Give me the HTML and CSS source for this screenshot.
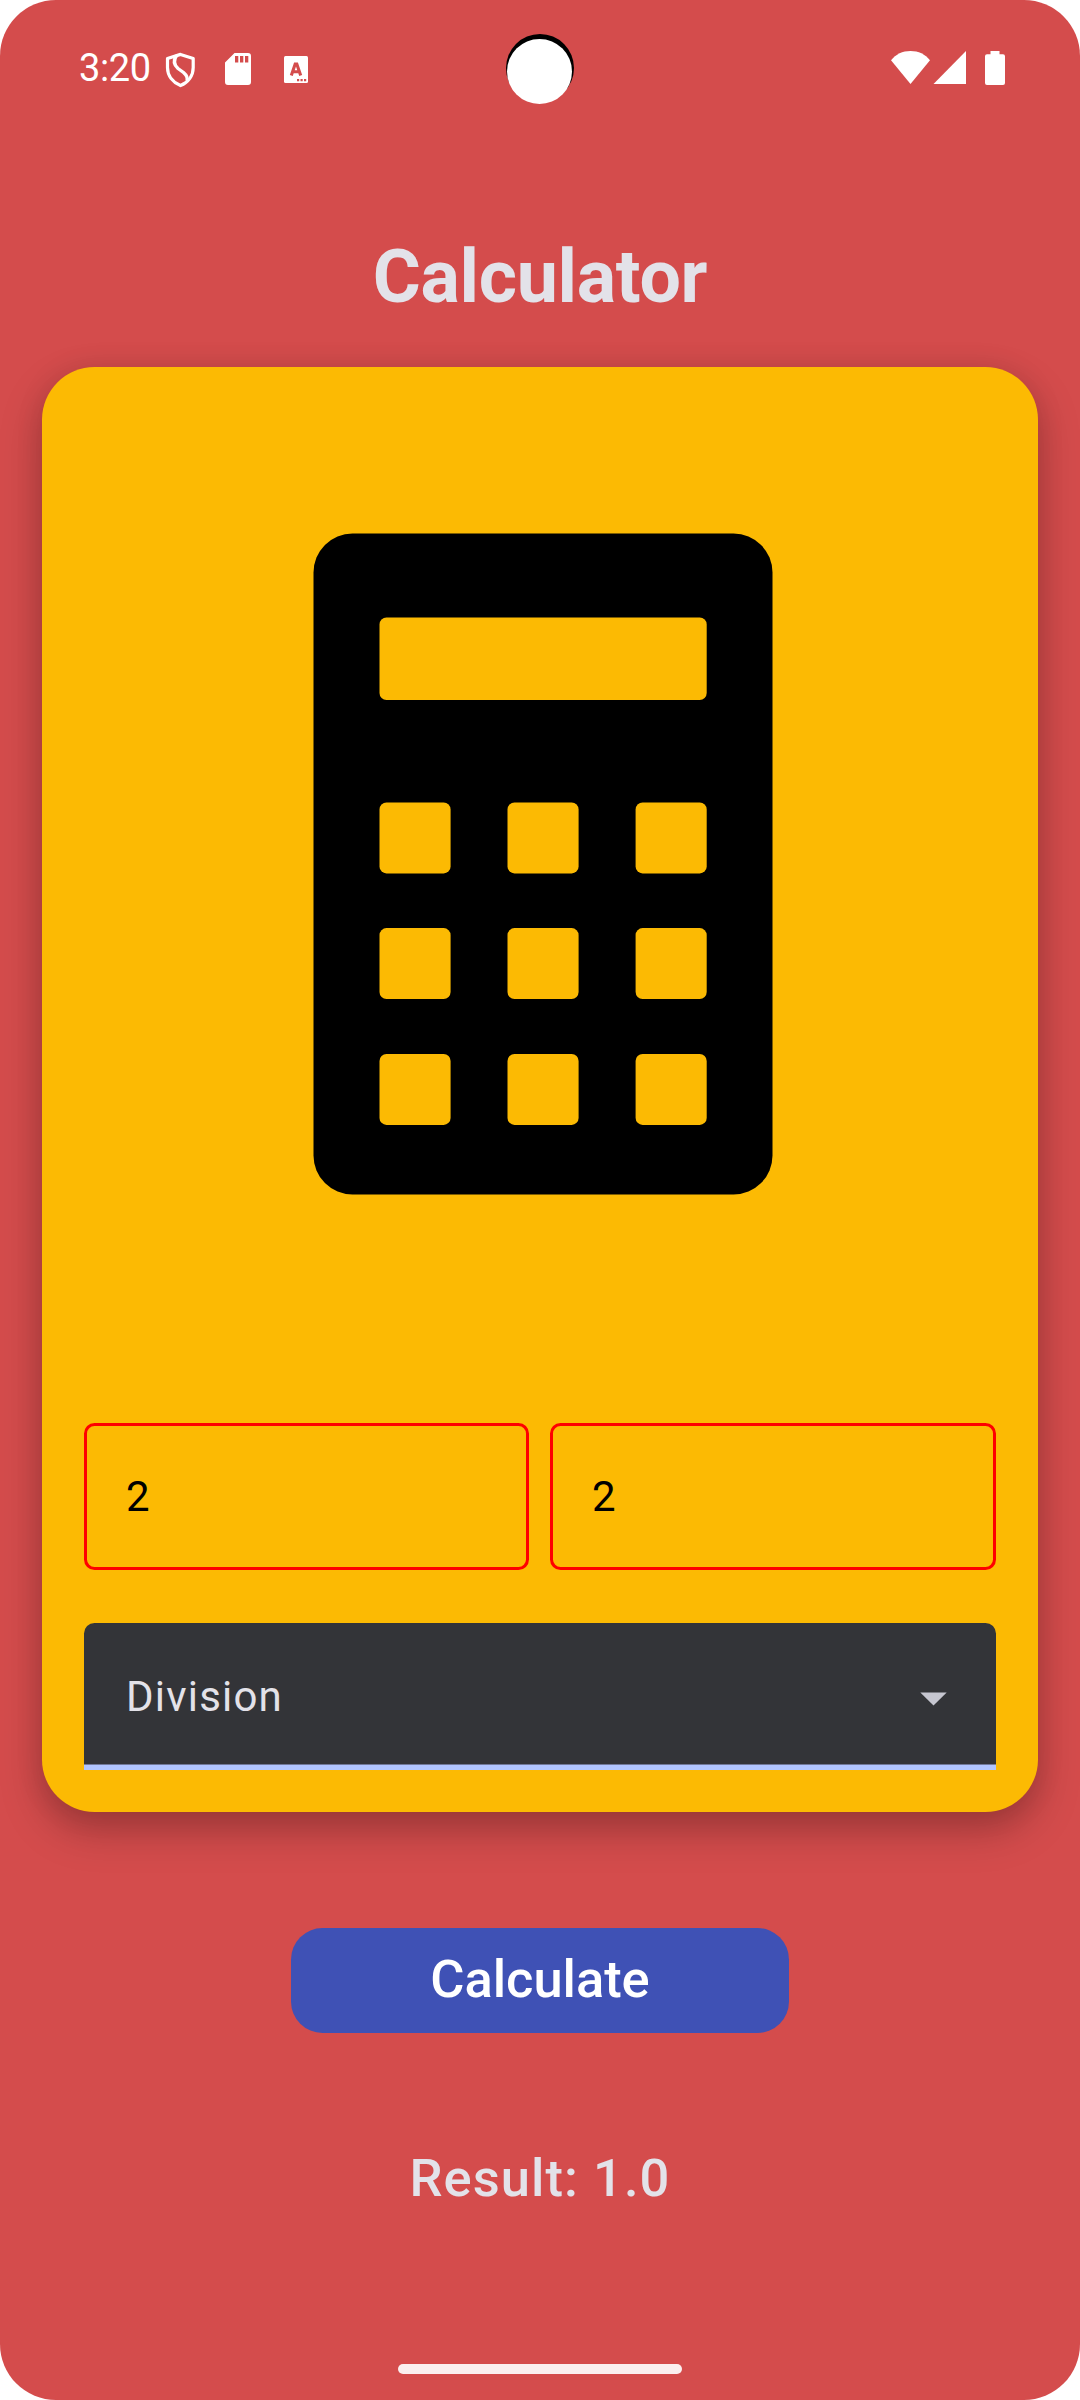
FILE: index.html
```html
<!DOCTYPE html>
<html lang="en">
<head>
<meta charset="utf-8">
<title>Calculator</title>
<link rel="stylesheet" href="styles.css">
</head>
<body>
<main class="screen">
  <header class="status-bar">
    <div class="status-left">
      <span class="clock">3:20</span>
      <svg class="icon-shield" width="30" height="36" viewBox="0 0 30 36" fill="none" stroke="#fff" stroke-width="3.2" stroke-linejoin="round">
        <path d="M15.500 2.400L28.200 6.500V15.500C28.200 24 23 30.500 15.500 33.600C8 30.500 2.500 24 2.500 15.500V6.500Z"/>
        <path d="M11.500 3.500C8.500 8 8.500 12.500 13 16.500L18.500 20.500C22 23.500 23 25.500 22 29" stroke-width="3.400"/>
      </svg>
      <svg class="icon-card" width="26" height="32" viewBox="0 0 26 32">
        <path fill="#fff" fill-rule="evenodd" d="M9.500 0H23A3 3 0 0 1 26 3V29A3 3 0 0 1 23 32H3A3 3 0 0 1 0 29V9.500ZM10 3V9.500H13.300V3ZM15 3V9.500H18.300V3ZM20 3V9.500H23.300V3Z"/>
      </svg>
      <svg class="icon-keyboard" width="24" height="27" viewBox="0 0 24 27">
        <rect width="24" height="27" rx="1.500" fill="#fff"/>
        <path d="M7.300 19.500L11.200 8H12.800L16.700 19.500M8.500 15.800H15.500" fill="none" stroke="#d44c4c" stroke-width="3.100"/>
        <path d="M13 23h2.200v2.200h-2.200zM16.500 23h2.200v2.200h-2.200zM20 23h2.200v2.200h-2.200z" fill="#d44c4c"/>
      </svg>
    </div>
    <div class="camera"></div>
    <svg class="status-right" width="114" height="34" viewBox="0 0 114 34" fill="#fff">
      <path d="M0 9.300C4.800 3.200 11.500 0 19.500 0S34.200 3.200 39 9.300L19.500 33Z"/>
      <path d="M75 0V33H42.500Z"/>
      <path d="M99.500 0H108.500V3.300H112A2 2 0 0 1 114 5.300V32A2 2 0 0 1 112 34H96A2 2 0 0 1 94 32V5.300A2 2 0 0 1 96 3.300H99.500Z"/>
    </svg>
  </header>
  <h1 class="title">Calculator</h1>
  <section class="card">
    <svg class="calculator" width="460" height="662" viewBox="313 533 460 662">
      <rect x="313.500" y="533.500" width="459" height="661" rx="39"/>
      <g fill="#fcba03">
        <rect x="379.500" y="617.400" width="327.200" height="82.600" rx="7"/>
        <rect x="379.500" y="802.400" width="71.100" height="71" rx="7"/>
        <rect x="507.500" y="802.400" width="71.100" height="71" rx="7"/>
        <rect x="635.600" y="802.400" width="71.100" height="71" rx="7"/>
        <rect x="379.500" y="928.100" width="71.100" height="71" rx="7"/>
        <rect x="507.500" y="928.100" width="71.100" height="71" rx="7"/>
        <rect x="635.600" y="928.100" width="71.100" height="71" rx="7"/>
        <rect x="379.500" y="1053.900" width="71.100" height="71" rx="7"/>
        <rect x="507.500" y="1053.900" width="71.100" height="71" rx="7"/>
        <rect x="635.600" y="1053.900" width="71.100" height="71" rx="7"/>
      </g>
    </svg>
    <div class="operands">
      <div class="operand">2</div>
      <div class="operand">2</div>
    </div>
    <div class="operation">
      <span>Division</span>
      <svg width="27" height="14" viewBox="0 0 27 14"><path d="M0.300 0.400H26.700L13.500 13.600Z" fill="#c6c6d0"/></svg>
    </div>
  </section>
  <button class="calculate" type="button">Calculate</button>
  <p class="result">Result: 1.0</p>
  <div class="home-handle"></div>
</main>
</body>
</html>
```
FILE: styles.css
```css
* { box-sizing: border-box; }

body {
  margin: 0;
  background: #fff;
  font-family: Roboto, sans-serif;
}

.screen {
  width: 1080px;
  height: 2400px;
  display: flex;
  flex-direction: column;
  align-items: center;
  background: #d44c4c;
  border-radius: 56px;
  overflow: hidden;
}

.status-bar {
  width: 100%;
  height: 136px;
  flex: none;
  display: grid;
  grid-template-columns: 1fr 68px 1fr;
  align-items: center;
  padding: 0 75px 0 79px;
}

.status-left { display: flex; align-items: center; }

.clock {
  width: 86px;
  color: #fff;
  font-size: 38px;
  line-height: 44px;
  letter-spacing: -.4px;
}

.icon-shield { margin-top: 3px; }
.icon-card { margin: 2px 0 0 30px; }
.icon-keyboard { margin: 2px 0 0 33px; }

.camera {
  width: 68px;
  height: 68px;
  margin-left: -2px;
  border-radius: 50%;
  background: #000;
  position: relative;
}

.camera::after {
  content: "";
  position: absolute;
  left: 1.200px;
  top: 5px;
  width: 65px;
  height: 65px;
  border-radius: 50%;
  background: #fff;
}

.status-right { justify-self: end; }

.title {
  margin: 98px 0 0;
  height: 133px;
  flex: none;
  color: #e3e2e9;
  font-size: 73.500px;
  line-height: 86px;
  font-weight: 700;
  letter-spacing: -.3px;
}

.card {
  width: 996px;
  height: 1445px;
  flex: none;
  display: flex;
  flex-direction: column;
  padding: 166px 42px 42px;
  border-radius: 52.500px;
  background: #fcba03;
  box-shadow: 0 18px 42px rgba(0, 0, 0, .26), 0 2px 30px rgba(0, 0, 0, .08);
}

.calculator { align-self: center; margin-left: 6px; }

.operands {
  display: grid;
  grid-template-columns: 445px 446px;
  gap: 21px;
  margin-top: 228px;
}

.operand {
  height: 147px;
  padding: 0 39px;
  border: 3px solid #f00;
  border-radius: 10.500px;
  color: #000;
  font-size: 42px;
  line-height: 141px;
}

.operation {
  height: 147px;
  margin-top: 53px;
  padding: 0 49px 0 42px;
  display: flex;
  align-items: center;
  justify-content: space-between;
  border-radius: 10.500px 10.500px 0 0;
  background: linear-gradient(#333438 141px, #72799a 141px 142px, #b1c5ff 142px);
  color: #e3e2e9;
  font-size: 42px;
  line-height: 63px;
  letter-spacing: 1.200px;
}

.operation svg { margin-top: 4px; }

.calculate {
  width: 498px;
  height: 105px;
  flex: none;
  margin-top: 116px;
  padding: 0 0 3px;
  border: 0;
  border-radius: 31.500px;
  background: #3f51b5;
  color: #fff;
  font: 500 52.500px/62px Roboto, sans-serif;
  letter-spacing: -.05px;
}

.result {
  margin: 110px 0 0;
  color: #e3e2e9;
  font-size: 52.500px;
  line-height: 70px;
  font-weight: 500;
  letter-spacing: 1.050px;
}

.home-handle {
  width: 284px;
  height: 10px;
  flex: none;
  margin: auto 0 26px;
  border-radius: 5px;
  background: #fbefef;
}
```
